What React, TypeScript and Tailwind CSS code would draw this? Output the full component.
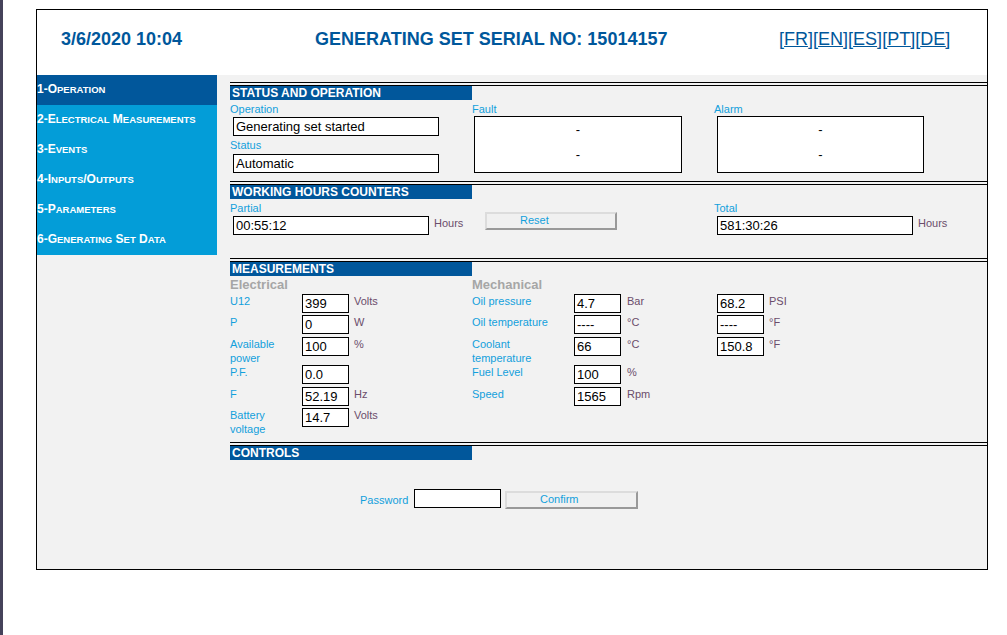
import React from "react";

const BLUE_DARK = "bg-[#01579b]";

const menu = [
  "1-Operation",
  "2-Electrical Measurements",
  "3-Events",
  "4-Inputs/Outputs",
  "5-Parameters",
  "6-Generating Set Data",
];

// fake small caps: lowercase runs are drawn smaller and uppercased
function SmallCaps({ text }: { text: string }) {
  const parts = text.match(/[a-z]+|[^a-z]+/g) || [];
  return (
    <>
      {parts.map((p, i) =>
        /[a-z]/.test(p[0]) ? (
          <span key={i} className="text-[9.5px] uppercase">
            {p}
          </span>
        ) : (
          <span key={i}>{p}</span>
        )
      )}
    </>
  );
}

function SectionBar({ title, className = "" }: { title: string; className?: string }) {
  return (
    <div className={`border-t border-black pt-[2px] ${className}`}>
      <div className="border-t border-black">
        <div className={`h-[14px] w-[242px] ${BLUE_DARK} pl-[2px] text-[12px] font-bold leading-[15px] text-white`}>
          {title}
        </div>
      </div>
    </div>
  );
}

function Label({ children, className = "" }: { children: React.ReactNode; className?: string }) {
  return <div className={`text-[11px] leading-[14px] text-[#12a0dc] ${className}`}>{children}</div>;
}

function Field({ value, className = "" }: { value: string; className?: string }) {
  return (
    <div className={`h-[19px] border border-black bg-white pl-[2px] text-[13px] leading-[17px] text-black ${className}`}>
      {value}
    </div>
  );
}

function Unit({ children, className = "" }: { children: React.ReactNode; className?: string }) {
  return <div className={`text-[11px] leading-[14px] text-[#6b4d6b] ${className}`}>{children}</div>;
}

function OldButton({ label, className = "" }: { label: string; className?: string }) {
  return (
    <div
      className={`h-[18px] border-2 border-t-[#dcdcdc] border-l-[#dcdcdc] border-r-[#999] border-b-[#999] bg-[#f0f0f0] pl-[33px] text-[11px] leading-[13px] text-[#12a0dc] ${className}`}
    >
      {label}
    </div>
  );
}

type Row = {
  h: string;
  label: string;
  val: string;
  unit: string;
  mLabel?: string;
  mVal?: string;
  mUnit?: string;
  xVal?: string;
  xUnit?: string;
};

const rows: Row[] = [
  { h: "h-[21px]", label: "U12", val: "399", unit: "Volts", mLabel: "Oil pressure", mVal: "4.7", mUnit: "Bar", xVal: "68.2", xUnit: "PSI" },
  { h: "h-[22px]", label: "P", val: "0", unit: "W", mLabel: "Oil temperature", mVal: "----", mUnit: "°C", xVal: "----", xUnit: "°F" },
  { h: "h-[28px]", label: "Available power", val: "100", unit: "%", mLabel: "Coolant temperature", mVal: "66", mUnit: "°C", xVal: "150.8", xUnit: "°F" },
  { h: "h-[22px]", label: "P.F.", val: "0.0", unit: "", mLabel: "Fuel Level", mVal: "100", mUnit: "%" },
  { h: "h-[21px]", label: "F", val: "52.19", unit: "Hz", mLabel: "Speed", mVal: "1565", mUnit: "Rpm" },
  { h: "h-[28px]", label: "Battery voltage", val: "14.7", unit: "Volts" },
];

export default function App() {
  return (
    <div className="flex min-h-[635px] w-[1007px] bg-white font-['Liberation_Sans',Arial,sans-serif]">
      <div className="w-[3px] shrink-0 bg-[#45425a]" />

      {/* frame */}
      <div className="ml-[33px] mt-[9px] flex h-[561px] w-[952px] flex-col border border-black">
        {/* header */}
        <div className="flex h-[65px] shrink-0 bg-white pl-[24px] pt-[19px] text-[18px] leading-[20px] text-[#00579b]">
          <div className="w-[254px] font-bold">3/6/2020 10:04</div>
          <div className="w-[464px] font-bold">GENERATING SET SERIAL NO: 15014157</div>
          <div className="flex">
            {["FR", "EN", "ES", "PT", "DE"].map((l) => (
              <a key={l} href="#" className="underline">
                [{l}]
              </a>
            ))}
          </div>
        </div>

        <div className="flex flex-1 bg-[#f2f2f2]">
          {/* sidebar */}
          <div className="w-[180px] shrink-0 self-start">
            {menu.map((m, i) => (
              <div
                key={m}
                className={`flex h-[30px] items-center text-[12px] font-bold text-white ${i === 0 ? BLUE_DARK : "bg-[#039dd8]"}`}
              >
                <span className="-mt-[2px]">
                  <SmallCaps text={m} />
                </span>
              </div>
            ))}
          </div>

          {/* main */}
          <div className="ml-[13px] flex-1">
            {/* STATUS AND OPERATION */}
            <SectionBar title="STATUS AND OPERATION" className="mt-[7px]" />
            <div className="flex">
              <div className="w-[242px]">
                <Label className="mt-[2px]">Operation</Label>
                <Field value="Generating set started" className="ml-[3px] mt-[1px] w-[206px]" />
                <Label className="mt-[2px]">Status</Label>
                <Field value="Automatic" className="ml-[3px] mt-[2px] w-[206px]" />
              </div>
              <div className="w-[242px]">
                <Label className="mt-[2px]">Fault</Label>
                <div className="ml-[2px] h-[57px] w-[208px] border border-black bg-white text-center text-[13px] leading-[25px] text-black">
                  <div>-</div>
                  <div>-</div>
                </div>
              </div>
              <div>
                <Label className="mt-[2px]">Alarm</Label>
                <div className="ml-[3px] h-[57px] w-[207px] border border-black bg-white text-center text-[13px] leading-[25px] text-black">
                  <div>-</div>
                  <div>-</div>
                </div>
              </div>
            </div>

            {/* WORKING HOURS COUNTERS */}
            <SectionBar title="WORKING HOURS COUNTERS" className="mt-[8px]" />
            <div className="flex">
              <div className="w-[242px]">
                <Label className="mt-[2px]">Partial</Label>
                <div className="mt-[1px] flex items-start">
                  <Field value="00:55:12" className="ml-[3px] w-[196px]" />
                  <Unit className="ml-[5px]">Hours</Unit>
                </div>
              </div>
              <div className="w-[242px]">
                <OldButton label="Reset" className="ml-[13px] mt-[13px] w-[132px]" />
              </div>
              <div>
                <Label className="mt-[2px]">Total</Label>
                <div className="mt-[1px] flex items-start">
                  <Field value="581:30:26" className="ml-[3px] w-[196px]" />
                  <Unit className="ml-[5px]">Hours</Unit>
                </div>
              </div>
            </div>

            {/* MEASUREMENTS */}
            <SectionBar title="MEASUREMENTS" className="mt-[23px]" />
            <div className="mt-[1px] flex text-[13px] font-bold leading-[15px] text-[#a6a6a6]">
              <div className="w-[242px]">Electrical</div>
              <div>Mechanical</div>
            </div>
            <div className="mt-[2px]">
              {rows.map((r) => (
                <div key={r.label} className={`flex items-start ${r.h}`}>
                  <Label className="w-[72px] pr-[4px]">{r.label}</Label>
                  <Field value={r.val} className="w-[47px]" />
                  <Unit className="w-[123px] pl-[5px]">{r.unit}</Unit>
                  {r.mLabel && (
                    <>
                      <Label className="w-[102px] pr-[12px]">{r.mLabel}</Label>
                      <Field value={r.mVal || ""} className="w-[47px]" />
                      <Unit className="w-[96px] pl-[6px]">{r.mUnit}</Unit>
                      {r.xVal && (
                        <>
                          <Field value={r.xVal} className="w-[47px]" />
                          <Unit className="pl-[5px]">{r.xUnit}</Unit>
                        </>
                      )}
                    </>
                  )}
                </div>
              ))}
            </div>

            {/* CONTROLS */}
            <SectionBar title="CONTROLS" className="mt-[6px]" />
            <div className="ml-[130px] mt-[29px] flex items-start">
              <Label className="mt-[4px] w-[47px]">Password</Label>
              <div className="ml-[7px] h-[19px] w-[87px] border border-black bg-white" />
              <OldButton label="Confirm" className="ml-[4px] mt-[2px] h-[17px] w-[133px] leading-[12px]" />
            </div>
          </div>
        </div>
      </div>
    </div>
  );
}
